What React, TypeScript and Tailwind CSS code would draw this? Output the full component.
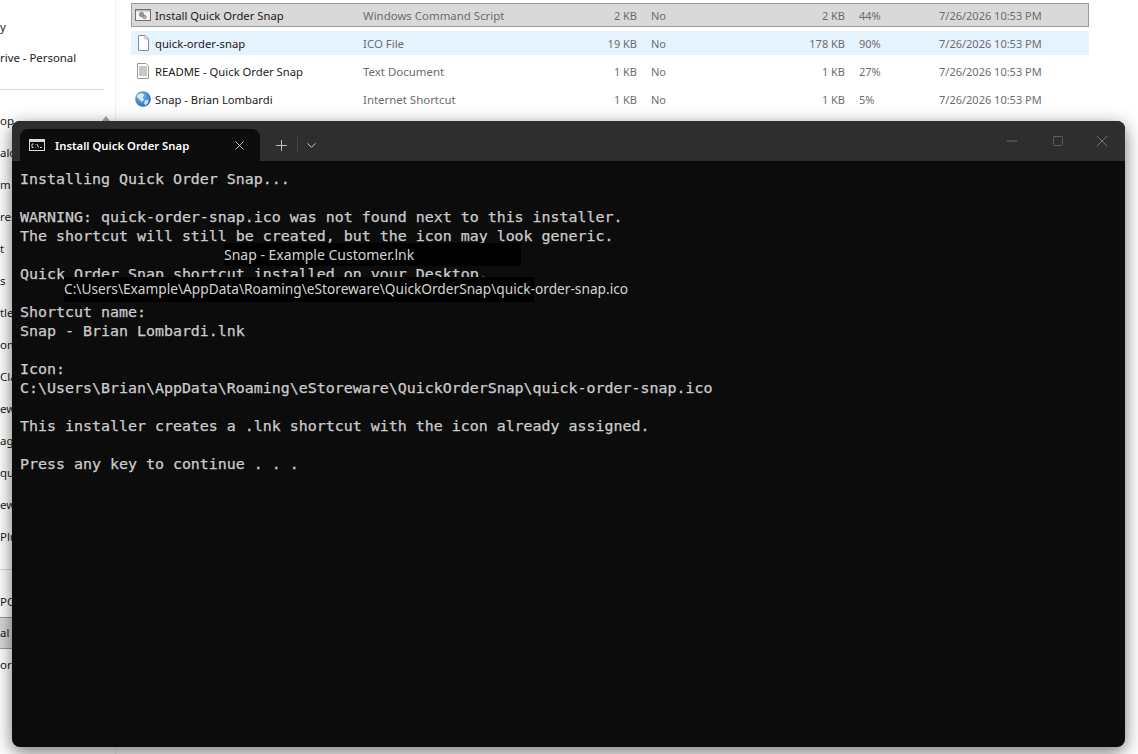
import { ChevronDown, Minus, Plus, Square, X } from "lucide-react";

const navItems = [
  { label: "y", top: "mt-[19px]" },
  { label: "rive - Personal", top: "mt-[15px]" },
];

const navLower = ["op", "alo", "m", "res", "t", "s", "tle", "om", "Cla", "ew", "agi", "qui", "ew", "Plu"];

const files = [
  { name: "Install Quick Order Snap", type: "Windows Command Script", size: "2 KB", real: "2 KB", ratio: "44%", icon: "cmd", tone: "selected" },
  { name: "quick-order-snap", type: "ICO File", size: "19 KB", real: "178 KB", ratio: "90%", icon: "blank", tone: "hover" },
  { name: "README - Quick Order Snap", type: "Text Document", size: "1 KB", real: "1 KB", ratio: "27%", icon: "text", tone: "" },
  { name: "Snap - Brian Lombardi", type: "Internet Shortcut", size: "1 KB", real: "1 KB", ratio: "5%", icon: "globe", tone: "" },
];

const FileIcon = ({ kind }: { kind: string }) => {
  if (kind === "cmd") {
    return (
      <svg width="16" height="16" viewBox="0 0 16 16" className="-mt-[2px]">
        <rect x="0.5" y="2.5" width="15" height="11" fill="#f4f4f4" stroke="#6f6f6f" />
        <rect x="1" y="3" width="14" height="1.5" fill="#b9b9b9" />
        <circle cx="6.5" cy="7.5" r="2.2" fill="#9a9a9a" stroke="#6a6a6a" strokeWidth="0.6" />
        <circle cx="9.5" cy="10" r="1.7" fill="#b5b5b5" stroke="#6a6a6a" strokeWidth="0.6" />
      </svg>
    );
  }
  if (kind === "blank") {
    return (
      <svg width="16" height="16" viewBox="0 0 16 16" className="-mt-[2px]">
        <path d="M3.5 0.5H10L13.5 4V15.5H3.5Z" fill="#fff" stroke="#8c8c8c" />
        <path d="M10 0.5V4H13.5" fill="none" stroke="#b0b0b0" />
      </svg>
    );
  }
  if (kind === "text") {
    return (
      <svg width="16" height="16" viewBox="0 0 16 16" className="-mt-[2px]">
        <path d="M2.5 0.5H11L13.5 3V15.5H2.5Z" fill="#fff" stroke="#9a9a9a" />
        <path d="M4 4H12M4 6H12M4 8H12M4 10H12M4 12H12" stroke="#8f8f8f" />
      </svg>
    );
  }
  return (
    <svg width="16" height="16" viewBox="0 0 16 16" className="-mt-[2px]">
      <defs>
        <radialGradient id="globe" cx="0.4" cy="0.35" r="0.75">
          <stop offset="0" stopColor="#7fc0ee" />
          <stop offset="1" stopColor="#1d62a8" />
        </radialGradient>
      </defs>
      <circle cx="8" cy="8" r="7.8" fill="url(#globe)" />
      <path d="M3 3.5 7 2 9.5 4 7.5 6.5 9 8.5 7 11 5 9 3 7 1.5 6Z" fill="#d7e8f4" />
      <path d="M10 9.5 13.5 8.5 13 12 10.5 14.5 9 12Z" fill="#cfe2f0" />
    </svg>
  );
};

const TerminalIcon = () => (
  <svg width="16" height="12" viewBox="0 0 16 12">
    <rect x="0.5" y="0.5" width="15" height="11" fill="#0c0c0c" stroke="#d8d8d8" />
    <rect x="1" y="1" width="14" height="2" fill="#d8d8d8" />
    <path d="M4.5 5H3V8.5H4.5M6.5 5.5V6M6.5 8V8.5M8 5 9.5 8.5M11 8.5H13" stroke="#e6e6e6" fill="none" strokeWidth="0.9" />
  </svg>
);

const consoleText = `Installing Quick Order Snap...

WARNING: quick-order-snap.ico was not found next to this installer.
The shortcut will still be created, but the icon may look generic.

Quick Order Snap shortcut installed on your Desktop.

Shortcut name:
Snap - Brian Lombardi.lnk

Icon:
C:\\Users\\Brian\\AppData\\Roaming\\eStoreware\\QuickOrderSnap\\quick-order-snap.ico

This installer creates a .lnk shortcut with the icon already assigned.

Press any key to continue . . .`;

export default function App() {
  return (
    <div className="relative flex h-[754px] w-[1138px] overflow-hidden bg-white font-['Noto_Sans',sans-serif] text-[11px]">
      {/* Explorer nav pane */}
      <aside className="h-full w-[116px] shrink-0 overflow-hidden border-r border-[#f0f0f0] text-[11.4px] text-[#1a1a1a]">
        {navItems.map((item) => (
          <div key={item.label} className={`${item.top} h-[16px] whitespace-nowrap leading-[16px]`}>
            {item.label}
          </div>
        ))}
        <div className="mt-[23px] mr-[11px] h-px bg-[#d9d9d9]" />
        <div className="mt-[23px] flex flex-col gap-[16px]">
          {navLower.map((label, i) => (
            <div key={i} className="h-[16px] whitespace-nowrap leading-[16px]">
              {label}
            </div>
          ))}
        </div>
        <div className="mt-[24px] mr-[11px] h-px bg-[#d9d9d9]" />
        <div className="mt-[24px] h-[16px] leading-[16px]">PC</div>
        <div className="mt-[7px] flex h-[32px] items-center border-y border-[#999] bg-[#d9d9d9]">al l</div>
        <div className="mt-[8px] h-[16px] leading-[16px]">or</div>
      </aside>

      {/* nav pane scroll arrow, just above the terminal */}
      <svg width="8" height="5" viewBox="0 0 8 5" className="absolute top-[116px] left-[102px]">
        <path d="M4 0 8 5H0Z" fill="#a6a6a6" />
      </svg>

      {/* Explorer file list */}
      <main className="flex-1 pt-[3px] pl-[15px]">
        <div className="flex w-[958px] flex-col gap-[4px]">
          {files.map((file) => (
            <div
              key={file.name}
              className={`flex h-[24px] items-center pt-[2px] ${
                file.tone === "selected"
                  ? "border border-[#999] bg-[#d9d9d9] pl-[3px]"
                  : file.tone === "hover"
                    ? "rounded-[2px] bg-[#e5f3ff] pl-[4px]"
                    : "pl-[4px]"
              } text-[#6d6d6d]`}
            >
              <FileIcon kind={file.icon} />
              <span className="ml-[4px] w-[208px] whitespace-nowrap text-[11.25px] text-[#1a1a1a]">{file.name}</span>
              <span className="w-[190px] whitespace-nowrap text-[11.45px]">{file.type}</span>
              <span className="w-[84px] text-right">{file.size}</span>
              <span className="ml-[14px] w-[50px]">No</span>
              <span className="w-[144px] text-right">{file.real}</span>
              <span className="ml-[14px] w-[80px]">{file.ratio}</span>
              <span className="whitespace-nowrap">7/26/2026 10:53 PM</span>
            </div>
          ))}
        </div>
      </main>

      {/* Terminal window floats over Explorer */}
      <section className="absolute top-[121px] left-[12px] flex h-[626px] w-[1113px] flex-col overflow-hidden rounded-[8px] bg-[#0c0c0c] shadow-[0_5px_18px_rgba(0,0,0,0.55)]">
        <header className="flex h-[40px] shrink-0 items-end bg-[#2e2e2e] pl-[8px]">
          <div className="flex h-[32px] w-[240px] items-center rounded-t-[8px] bg-[#0c0c0c] pr-[13px] pl-[9px] text-white">
            <TerminalIcon />
            <span className="mt-[2px] ml-[10px] flex-1 text-[11.3px] font-semibold">Install Quick Order Snap</span>
            <X size={15} strokeWidth={1.3} className="text-[#e8e8e8]" />
          </div>
          <div className="flex h-[32px] items-center text-[#d8d8d8]">
            <Plus size={17} strokeWidth={1.2} className="ml-[13px]" />
            <div className="mx-[7px] h-[16px] w-px bg-[#454545]" />
            <ChevronDown size={15} strokeWidth={1.4} className="-ml-[1px]" />
          </div>
          <div className="ml-auto flex h-[40px] items-center pr-[13px] text-[#8a8a8a]">
            <Minus size={16} strokeWidth={1} className="-ml-[2px]" />
            <Square size={12} strokeWidth={1} className="ml-[32px]" />
            <X size={20} strokeWidth={0.9} className="ml-[28px]" />
          </div>
        </header>
        <pre className="px-[8px] pt-[9px] font-['DejaVu_Sans_Mono',monospace] text-[14.95px] leading-[19px] text-[#cccccc] [-webkit-text-stroke:0.25px_#cccccc]">
          {consoleText}
        </pre>
      </section>

      {/* Pasted labels lying over the console */}
      <div className="absolute top-[243px] left-[224px] flex h-[23px] w-[297px] items-center bg-black pb-[1px] text-[14px] text-[#d4d4d4]">
        Snap - Example Customer.lnk
      </div>
      <div className="absolute top-[277px] left-[64px] flex h-[25px] w-[470px] items-center whitespace-nowrap bg-black text-[13.7px] text-[#d4d4d4]">
        {"C:\\Users\\Example\\AppData\\Roaming\\eStoreware\\QuickOrderSnap\\quick-order-snap.ico"}
      </div>
    </div>
  );
}
